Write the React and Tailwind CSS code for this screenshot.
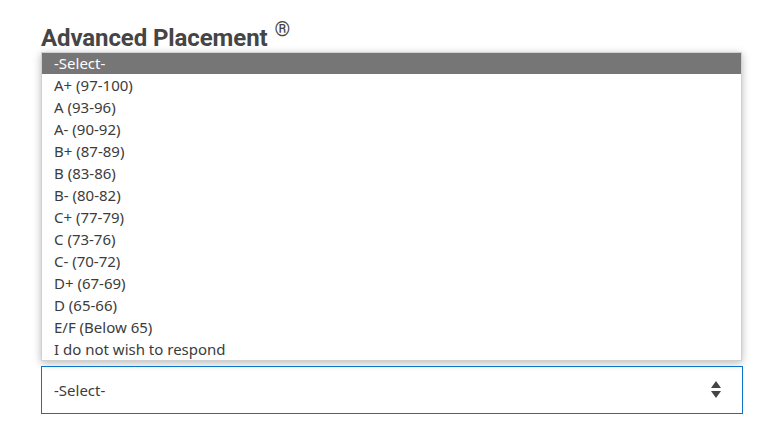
const options = [
  'A+ (97-100)',
  'A (93-96)',
  'A- (90-92)',
  'B+ (87-89)',
  'B (83-86)',
  'B- (80-82)',
  'C+ (77-79)',
  'C (73-76)',
  'C- (70-72)',
  'D+ (67-69)',
  'D (65-66)',
  'E/F (Below 65)',
  'I do not wish to respond',
];

export default function App() {
  return (
    <main className="w-[769px] h-[441px] bg-white px-[41px] pt-[20px]">
      <h2 className="h-[32px] text-[24px] leading-[32px] font-bold text-[#454545] font-['Roboto',sans-serif] tracking-[-0.1px] flex items-start">
        <span className="mt-[2px]">Advanced Placement</span>
        <span className="font-normal text-[20px] leading-[20px] ml-[7px] mt-[-1px]">®</span>
      </h2>
      <div className="w-[701px] border border-[#d0d0d0] shadow-[0_2px_8px_rgba(0,0,0,0.28)] bg-white font-['Noto_Sans',sans-serif] text-[15px] text-[#3c3c3c]">
        <div className="h-[21px] leading-[21px] px-[12px] bg-[#767676] text-white">-Select-</div>
        {options.map((o) => (
          <div key={o} className="h-[22px] leading-[22px] px-[12px]">{o}</div>
        ))}
      </div>
      <div className="mt-[5px] w-[702px] h-[48px] border border-[#0a72c9] flex items-center justify-between pl-[12px] pr-[20px] font-['Noto_Sans',sans-serif] text-[15px] text-[#3c3c3c]">
        <span>-Select-</span>
        <svg width="12" height="18" viewBox="0 0 12 18">
          <path d="M6 0 L11 7 L1 7 Z" fill="#444" />
          <path d="M1 10 L11 10 L6 17 Z" fill="#444" />
        </svg>
      </div>
    </main>
  );
}
